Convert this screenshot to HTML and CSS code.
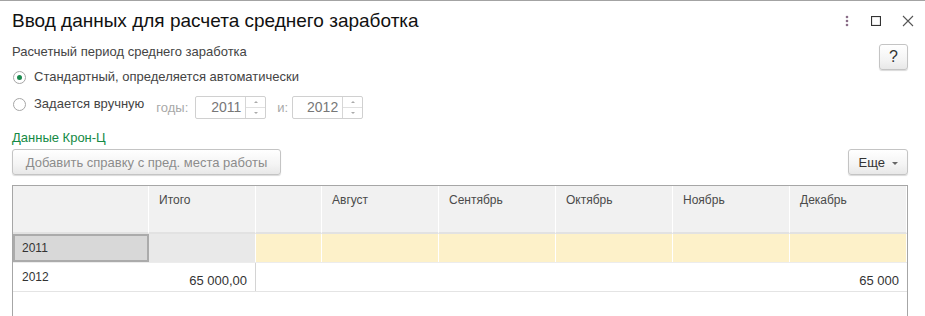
FILE: index.html
```html
<!DOCTYPE html>
<html lang="ru">
<head>
  <meta charset="UTF-8">
  <title>Ввод данных для расчета среднего заработка</title>
  <link rel="stylesheet" href="styles.css">
</head>
<body>

  <div class="okno">
    <div class="zagolovok">
      <h1>Ввод данных для расчета среднего заработка</h1>
      <div class="knopki-okna">
        <svg width="6" height="12" viewBox="0 0 6 12"><circle cx="3" cy="2" r="1.3" fill="#8a6d88"/><circle cx="3" cy="6" r="1.3" fill="#8a6d88"/><circle cx="3" cy="10" r="1.3" fill="#8a6d88"/></svg>
        <svg width="10" height="10" viewBox="0 0 10 10"><rect x="0.5" y="0.5" width="9" height="9" fill="none" stroke="#333" stroke-width="1.2"/></svg>
        <svg width="12" height="12" viewBox="0 0 12 12"><path d="M1 1 L11 11 M11 1 L1 11" stroke="#555" stroke-width="1.1"/></svg>
      </div>
    </div>

    <div class="forma">
      <div class="stroka-period">
        <span class="podpis">Расчетный период среднего заработка</span>
        <button class="knopka knopka-vopros">?</button>
      </div>

      <label class="radio">
        <span class="krug vybran"></span>
        Стандартный, определяется автоматически
      </label>

      <div class="stroka-vruchnuyu">
        <label class="radio">
          <span class="krug"></span>
          Задается вручную
        </label>
        <span class="seryi otstup-godu">годы:</span>
        <div class="pole">
          <span class="znachenie">2011</span>
          <span class="strelki"><span class="vverh"></span><span class="vniz"></span></span>
        </div>
        <span class="seryi otstup-i">и:</span>
        <div class="pole">
          <span class="znachenie">2012</span>
          <span class="strelki"><span class="vverh"></span><span class="vniz"></span></span>
        </div>
      </div>

      <div class="zelenyi">Данные Крон-Ц</div>

      <div class="panel">
        <button class="knopka knopka-dobavit">Добавить справку с пред. места работы</button>
        <button class="knopka knopka-eshe">Еще <span class="treugolnik"></span></button>
      </div>

      <div class="tablica">
        <div class="sapka">
          <div></div>
          <div>Итого</div>
          <div></div>
          <div>Август</div>
          <div>Сентябрь</div>
          <div>Октябрь</div>
          <div>Ноябрь</div>
          <div>Декабрь</div>
        </div>
        <div class="ryad ryad-2011">
          <div class="yacheika-god">2011</div>
          <div class="yacheika-itogo"></div>
          <div class="mesyac"></div>
          <div class="mesyac"></div>
          <div class="mesyac"></div>
          <div class="mesyac"></div>
          <div class="mesyac"></div>
          <div class="mesyac"></div>
        </div>
        <div class="ryad ryad-2012">
          <div class="god">2012</div>
          <div class="summa">65 000,00</div>
          <div class="summa mesyacy">65 000</div>
        </div>
      </div>
    </div>
  </div>

</body>
</html>
```

FILE: styles.css
```css
html, body {
  margin: 0;
  height: 100%;
  overflow: hidden;
}
body {
  font-family: "Liberation Sans", Arial, sans-serif;
  background-color: white;
  color: #333;
}
.okno {
  border-top: 1px solid #a3a3a3;
}
.zagolovok {
  display: flex;
  align-items: center;
  justify-content: space-between;
  height: 40px;
  padding: 0 11px 0 12px;
}
.zagolovok h1 {
  margin: 0;
  font-size: 19px;
  font-weight: normal;
  color: #111;
}
.knopki-okna {
  display: flex;
  align-items: center;
  gap: 21px;
}
.forma {
  padding: 3px 17px 0 12px;
  font-size: 13px;
}
.stroka-period {
  display: flex;
  justify-content: space-between;
  align-items: flex-start;
  height: 26px;
}
.podpis {
  line-height: 16px;
  color: #444;
}
.knopka {
  font-family: inherit;
  font-size: 13px;
  border: 1px solid #c4c4c4;
  border-radius: 3px;
  background: linear-gradient(#ffffff, #f4f4f4 60%, #e8e8e8);
  box-shadow: 0 1px 1px rgba(0,0,0,0.15);
  padding: 0;
  height: 26px;
  color: #333;
}
.knopka-vopros {
  width: 29px;
  font-size: 16px;
}
.radio {
  display: flex;
  align-items: center;
  gap: 8px;
  line-height: 14px;
  color: #444;
  padding-left: 1px;
}
.krug {
  width: 11px;
  height: 11px;
  border: 1px solid #a6a6a6;
  border-radius: 50%;
  display: flex;
  align-items: center;
  justify-content: center;
}
.krug.vybran::after {
  content: "";
  width: 5px;
  height: 5px;
  border-radius: 50%;
  background-color: #1a8a4e;
}
.stroka-vruchnuyu {
  display: flex;
  align-items: center;
  margin-top: 12px;
  height: 23px;
}
.stroka-vruchnuyu .radio {
  align-self: flex-start;
  margin-top: 1px;
}
.seryi {
  color: #a8a8a8;
}
.otstup-godu {
  margin: 0 7px 0 12px;
}
.otstup-i {
  margin: 0 4px 0 11px;
}
.pole {
  display: flex;
  width: 69px;
  height: 21px;
  border: 1px solid #d0d0d0;
  border-radius: 2px;
}
.znachenie {
  flex: 1;
  text-align: right;
  padding-right: 4px;
  line-height: 21px;
  color: #777;
  font-size: 14px;
}
.strelki {
  width: 19px;
  border-left: 1px solid #d6d6d6;
  display: flex;
  flex-direction: column;
}
.strelki span {
  flex: 1;
  display: flex;
  align-items: center;
  justify-content: center;
}
.strelki .vverh {
  border-bottom: 1px solid #e0e0e0;
}
.strelki .vverh::after {
  content: "";
  border-left: 2px solid transparent;
  border-right: 2px solid transparent;
  border-bottom: 2px solid #aaa;
}
.strelki .vniz::after {
  content: "";
  border-left: 2px solid transparent;
  border-right: 2px solid transparent;
  border-top: 2px solid #aaa;
}
.zelenyi {
  color: #148a45;
  margin-top: 12px;
  line-height: 14px;
}
.panel {
  display: flex;
  justify-content: space-between;
  margin-top: 4px;
}
.knopka-dobavit {
  width: 269px;
  color: #8c8c8c;
  font-size: 13px;
}
.knopka-eshe {
  width: 60px;
  color: #333;
}
.treugolnik {
  display: inline-block;
  margin-left: 3px;
  vertical-align: middle;
  border-left: 3px solid transparent;
  border-right: 3px solid transparent;
  border-top: 3px solid #666;
}
.tablica {
  margin-top: 10px;
  border: 1px solid #a6a6a6;
  height: 200px;
  font-size: 12px;
}
.sapka, .ryad-2011 {
  display: grid;
  grid-template-columns: 136px 107px 66px 117px 117px 117px 117px 117px;
}
.sapka div {
  box-sizing: border-box;
  background-color: #f1f1f1;
  border-right: 1px solid #fff;
  border-bottom: 2px solid #e2e2e2;
  height: 48px;
  padding: 7px 0 0 10px;
  color: #4a4a4a;
}
.ryad-2011 div {
  height: 28px;
  border-right: 1px solid #fff;
  box-sizing: border-box;
}
.ryad-2011 .yacheika-god {
  background-color: #d8d8d8;
  border: 2px solid #ababab;
  padding: 5px 0 0 7px;
  color: #333;
}
.ryad-2011 .yacheika-itogo {
  background-color: #e9e9e9;
}
.ryad-2011 .mesyac {
  background-color: #fdf1c9;
}
.ryad-2012 {
  display: grid;
  grid-template-columns: 136px 107px 1fr;
  border-top: 1px solid #ececec;
  border-bottom: 1px solid #e4e4e4;
  height: 28px;
}
.ryad-2012 div {
  color: #333;
}
.ryad-2012 .god {
  padding: 7px 0 0 9px;
}
.ryad-2012 .summa {
  text-align: right;
  padding: 10px 8px 0 0;
  font-size: 13px;
  border-right: 1px solid #d4d4d4;
}
.ryad-2012 .mesyacy {
  border-right: none;
}
```
